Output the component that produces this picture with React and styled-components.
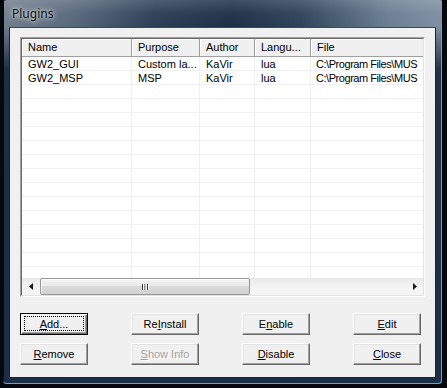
import React from 'react';
import styled, { createGlobalStyle } from 'styled-components';

const Global = createGlobalStyle`
  html, body { margin: 0; padding: 0; background: #000; }
  body { font-family: "Liberation Sans", Arial, sans-serif; }
`;

const Frame = styled.div`
  position: relative;
  width: 447px;
  height: 388px;
  box-sizing: border-box;
  padding: 0 11px 10px 9px;
  display: flex;
  flex-direction: column;
  border-radius: 7px 7px 0 0;
  overflow: hidden;
  background:
    linear-gradient(to right, #05080c 0, #05080c 4px, transparent 4px, transparent calc(100% - 5px), #05080c calc(100% - 5px)),
    linear-gradient(to bottom, transparent calc(100% - 4px), #05080c calc(100% - 4px)),
    linear-gradient(to bottom, rgba(255,255,255,0.16) 0, rgba(255,255,255,0.04) 13px, transparent 27px, rgba(16,34,56,0.85) 70px, #1a2e46 100%),
    linear-gradient(96deg, #727f8d 0%, #5a6b7e 14%, #2c3f56 32%, #1c2f46 48%, #2e4359 62%, #6a7e92 80%, #8c9dae 100%);
  &::after {
    content: '';
    position: absolute;
    left: 3px;
    right: 5px;
    top: 24px;
    bottom: 4px;
    border-right: 1px solid #3bb6e8;
    border-bottom: 1px solid #3bb6e8;
    border-radius: 0 0 4px 4px;
    pointer-events: none;
  }
`;

const TitleBar = styled.div`
  height: 27px;
  display: flex;
  align-items: center;
  padding-left: 3px;
  font-family: "Noto Sans", "Open Sans", sans-serif;
  font-size: 12px;
  color: #0a0a0a;
  text-shadow: 0 0 6px rgba(255,255,255,0.9), 0 0 3px rgba(255,255,255,0.7);
`;

const Client = styled.div`
  flex: 1;
  box-sizing: border-box;
  background: #f0f0f0;
  border: 1px solid #1a2431;
  border-top-color: #3c4a58;
  padding: 9px 10px 0 10px;
  display: flex;
  flex-direction: column;
`;

const ListOuter = styled.div`
  width: 405px;
  height: 260px;
  box-sizing: border-box;
  border: 1px solid;
  border-color: #a0a0a0 #ffffff #ffffff #a0a0a0;
`;

const ListInner = styled.div`
  height: 100%;
  box-sizing: border-box;
  border: 1px solid;
  border-color: #696969 #e3e3e3 #e3e3e3 #696969;
  background: #fff;
  display: flex;
  flex-direction: column;
  overflow: hidden;
`;

const Header = styled.div`
  display: flex;
  height: 18px;
  flex-shrink: 0;
`;

const HeaderCell = styled.div`
  flex: 0 0 ${p => p.$w}px;
  box-sizing: border-box;
  background: #f0f0f0;
  border-right: 1px solid #a0a0a0;
  border-bottom: 1px solid #a0a0a0;
  box-shadow: inset 1px 1px #ffffff;
  padding-left: 6px;
  font-size: 11px;
  line-height: 17px;
  color: #000;
  white-space: nowrap;
  overflow: hidden;
`;

const Body = styled.div`
  flex: 1;
  overflow: hidden;
`;

const Row = styled.div`
  display: flex;
  height: 14px;
`;

const Cell = styled.div`
  flex: 0 0 ${p => p.$w}px;
  box-sizing: border-box;
  border-right: 1px solid #f0f0f0;
  border-bottom: 1px solid #f0f0f0;
  padding-left: ${p => p.$tight ? 5 : 6}px;
  font-size: 11px;
  line-height: 14px;
  letter-spacing: ${p => p.$tight ? '-0.45px' : '0'};
  color: #000;
  white-space: nowrap;
  overflow: hidden;
`;

const ScrollBar = styled.div`
  height: 17px;
  flex-shrink: 0;
  display: flex;
  align-items: stretch;
  background: linear-gradient(to bottom, #e8e8e8, #f2f2f2 40%, #f6f6f6);
`;

const Arrow = styled.div`
  flex: 0 0 17px;
  display: flex;
  align-items: center;
  justify-content: center;
`;

const Track = styled.div`
  flex: 1;
  display: flex;
  align-items: stretch;
  padding: 0 0 0 1px;
`;

const Thumb = styled.div`
  width: 210px;
  box-sizing: border-box;
  border: 1px solid #979797;
  border-radius: 2px;
  background: linear-gradient(to bottom, #f4f4f4 0%, #eaeaea 45%, #d9d9d9 50%, #d2d2d2 100%);
  box-shadow: inset 1px 1px rgba(255,255,255,0.8);
  display: flex;
  align-items: center;
  justify-content: center;
`;

const Buttons = styled.div`
  margin-top: 16px;
  display: grid;
  grid-template-columns: repeat(4, 68px);
  grid-auto-rows: 22px;
  column-gap: 43px;
  row-gap: 8px;
`;

const Button = styled.div`
  box-sizing: border-box;
  background: #f0f0f0;
  border: 1px solid;
  border-color: ${p => p.$default ? '#000 #000 #000 #000' : '#ffffff #696969 #696969 #ffffff'};
  box-shadow: ${p => p.$default
    ? 'inset 1px 1px #ffffff, inset -1px -1px #696969, inset -2px -2px #a0a0a0'
    : 'inset -1px -1px #a0a0a0, inset 1px 1px #e3e3e3'};
  padding: ${p => p.$default ? '2px 3px 3px 3px' : '3px 4px'};
  display: flex;
  font-size: 11px;
  color: ${p => p.$disabled ? '#a0a0a0' : '#000'};
  text-shadow: ${p => p.$disabled ? '1px 1px #ffffff' : 'none'};
`;

const Label = styled.span`
  flex: 1;
  display: flex;
  align-items: center;
  justify-content: center;
  border: 1px dotted ${p => p.$focus ? '#000' : 'transparent'};
  white-space: nowrap;
`;

const cols = [110, 68, 55, 56, 130];
const headers = ['Name', 'Purpose', 'Author', 'Langu...', 'File'];
const data = [
  ['GW2_GUI', 'Custom la...', 'KaVir', 'lua', 'C:\\Program Files\\MUS'],
  ['GW2_MSP', 'MSP', 'KaVir', 'lua', 'C:\\Program Files\\MUS'],
];
const rows = [...data, ...Array.from({ length: 14 }, () => ['', '', '', '', ''])];

const ArrowIcon = ({ dir }) => (
  <svg width="4" height="7" viewBox="0 0 4 7">
    {dir === 'left'
      ? <path d="M4 0 L0 3.5 L4 7 Z" fill="#1a1a1a" />
      : <path d="M0 0 L4 3.5 L0 7 Z" fill="#1a1a1a" />}
  </svg>
);

const Grip = () => (
  <svg width="7" height="6" viewBox="0 0 7 6">
    <rect x="0" y="0" width="1" height="6" fill="#3c3c3c" />
    <rect x="1" y="0" width="1" height="6" fill="#ffffff" />
    <rect x="2.5" y="0" width="1" height="6" fill="#3c3c3c" />
    <rect x="3.5" y="0" width="1" height="6" fill="#ffffff" />
    <rect x="5" y="0" width="1" height="6" fill="#3c3c3c" />
    <rect x="6" y="0" width="1" height="6" fill="#ffffff" />
  </svg>
);

export default function App() {
  return (
    <>
      <Global />
      <Frame>
        <TitleBar>Plugins</TitleBar>
        <Client>
          <ListOuter>
            <ListInner>
              <Header>
                {headers.map((h, i) => <HeaderCell key={h} $w={cols[i]}>{h}</HeaderCell>)}
              </Header>
              <Body>
                {rows.map((r, ri) => (
                  <Row key={ri}>
                    {r.map((c, ci) => <Cell key={ci} $w={cols[ci]} $tight={ci === 4}>{c}</Cell>)}
                  </Row>
                ))}
              </Body>
              <ScrollBar>
                <Arrow><ArrowIcon dir="left" /></Arrow>
                <Track>
                  <Thumb><Grip /></Thumb>
                </Track>
                <Arrow><ArrowIcon dir="right" /></Arrow>
              </ScrollBar>
            </ListInner>
          </ListOuter>
          <Buttons>
            <Button $default><Label $focus><u>A</u>dd...</Label></Button>
            <Button><Label>Re<u>I</u>nstall</Label></Button>
            <Button><Label>E<u>n</u>able</Label></Button>
            <Button><Label><u>E</u>dit</Label></Button>
            <Button><Label><u>R</u>emove</Label></Button>
            <Button $disabled><Label><u>S</u>how Info</Label></Button>
            <Button><Label><u>D</u>isable</Label></Button>
            <Button><Label><u>C</u>lose</Label></Button>
          </Buttons>
        </Client>
      </Frame>
    </>
  );
}
